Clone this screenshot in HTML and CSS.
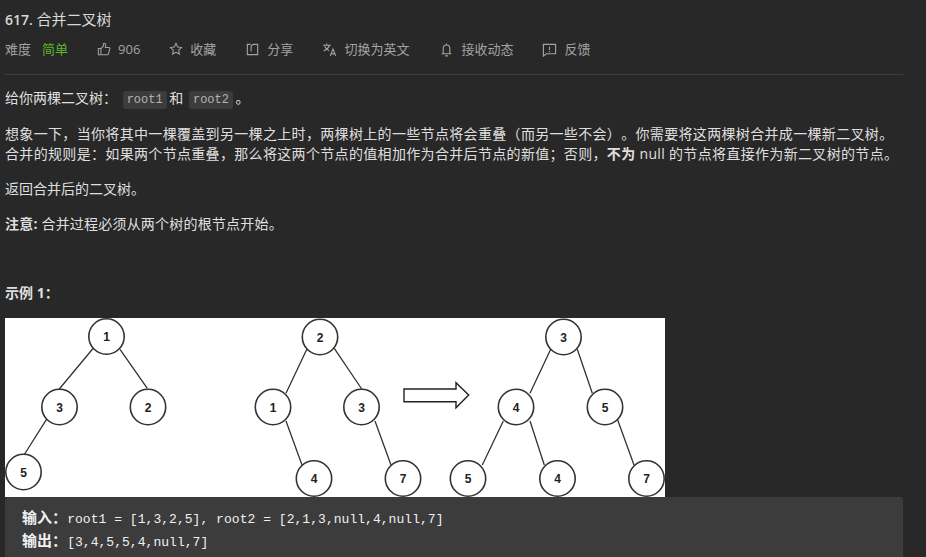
FILE: index.html
```html
<!DOCTYPE html>
<html lang="zh-CN">
<head>
  <meta charset="UTF-8" />
  <meta name="viewport" content="width=device-width, initial-scale=1" />
  <title>617. 合并二叉树</title>
  <link rel="stylesheet" href="styles.css">
</head>
<body>

  <div class="question">
    <!-- Title and toolbar -->
    <h1 class="question-title">617. <span>合并二叉树</span></h1>
    <div class="question-meta">
      <span class="meta-difficulty">难度<em>简单</em></span>
      <span class="meta-item">
        <svg class="icon icon-small" viewBox="0 0 16 16"><path d="M1.500 7.500h3v7h-3zM4.500 7.500l3-3.200V1.600c1.500-.4 2.600.6 2.400 2.200L9.500 6.300h4c.9 0 1.300.7 1.100 1.500l-1.500 5.700c-.2.6-.6 1-1.200 1H4.500"/></svg>
        906
      </span>
      <span class="meta-item">
        <svg class="icon icon-small" viewBox="0 0 16 16"><path d="M8 1.800l1.900 4 4.400.6-3.200 3 .8 4.400L8 11.700l-3.900 2.100.8-4.400-3.200-3 4.400-.6z"/></svg>
        收藏
      </span>
      <span class="meta-item">
        <svg class="icon" viewBox="0 0 16 16"><path d="M6 2.500H2.500v11h11v-11H9.500c-1.800 0-3 1.200-3 3V10"/></svg>
        分享
      </span>
      <span class="meta-item">
        <svg class="icon" viewBox="0 0 16 16"><path d="M1 3.500h8.500M5 1.500v2M8 3.500C7.200 6 4.800 8.200 1.800 9.500M2.800 4.500c.9 2 2.500 3.700 4.700 4.800M8.800 14.800l2.900-7.300 2.900 7.300M9.800 12.600h3.800"/></svg>
        切换为英文
      </span>
      <span class="meta-item meta-bell">
        <svg class="icon" viewBox="0 0 16 16"><path d="M2.800 12.500h10.400M4.500 12.500V7c0-2.200 1.500-3.800 3.500-3.800s3.500 1.600 3.500 3.800v5.500M8 1.500v1.700M6.500 14.800h3"/></svg>
        接收动态
      </span>
      <span class="meta-item">
        <svg class="icon" viewBox="0 0 16 16"><path d="M1.500 2.500h13v10H4.500l-3 2.500zM8 5v3.500M8 9.700v1.200"/></svg>
        反馈
      </span>
    </div>

    <!-- Description -->
    <div class="question-content">
      <p>给你两棵二叉树： <code>root1</code> 和 <code>root2</code> 。</p>
      <p class="spaced">想象一下，当你将其中一棵覆盖到另一棵之上时，两棵树上的一些节点将会重叠（而另一些不会）。你需要将这两棵树合并成一棵新二叉树。<br>合并的规则是：如果两个节点重叠，那么将这两个节点的值相加作为合并后节点的新值；否则，<strong>不为</strong> null 的节点将直接作为新二叉树的节点。</p>
      <p>返回合并后的二叉树。</p>
      <p class="note"><strong>注意:</strong> 合并过程必须从两个树的根节点开始。</p>

      <p class="example-title"><strong>示例 1：</strong></p>

      <svg class="diagram" viewBox="0 0 660 179" width="660" height="179">
        <g class="edges">
          <path d="M88 30.500L54.300 71M115 31.300L142.300 70.300M42.500 99.800L19 137"/>
          <path d="M302.300 30.300L281 75.300M329.300 30.300L356.700 71M281 103L297 147M370 103L386 147"/>
          <path d="M545.700 31.300L525 75.300M572.300 31.300L587.300 75.300M498.300 103L477.300 147M525 103L539.300 147M612.500 101.500L629 147"/>
          <path class="arrow" d="M399 71h52v-6.300l12.700 12.300-12.700 12.700v-6h-52z"/>
        </g>
        <g class="nodes">
          <circle cx="101.500" cy="18.500" r="17.700"/>
          <circle cx="54.500" cy="89" r="17.700"/>
          <circle cx="143" cy="89" r="17.700"/>
          <circle cx="18.500" cy="154" r="17.700"/>
          <circle cx="315" cy="19" r="17.700"/>
          <circle cx="268" cy="89" r="17.700"/>
          <circle cx="356.500" cy="89" r="17.700"/>
          <circle cx="309" cy="160.500" r="17.700"/>
          <circle cx="398" cy="160.500" r="17.700"/>
          <circle cx="558.500" cy="19" r="17.700"/>
          <circle cx="511" cy="89" r="17.700"/>
          <circle cx="600" cy="89" r="17.700"/>
          <circle cx="463" cy="160.500" r="17.700"/>
          <circle cx="552.500" cy="160.500" r="17.700"/>
          <circle cx="641.500" cy="160.500" r="17.700"/>
        </g>
        <g class="labels">
          <text x="101.500" y="23">1</text>
          <text x="54.500" y="93.500">3</text>
          <text x="143" y="93.500">2</text>
          <text x="18.500" y="158.500">5</text>
          <text x="315" y="23.500">2</text>
          <text x="268" y="93.500">1</text>
          <text x="356.500" y="93.500">3</text>
          <text x="309" y="165">4</text>
          <text x="398" y="165">7</text>
          <text x="558.500" y="23.500">3</text>
          <text x="511" y="93.500">4</text>
          <text x="600" y="93.500">5</text>
          <text x="463" y="165">5</text>
          <text x="552.500" y="165">4</text>
          <text x="641.500" y="165">7</text>
        </g>
      </svg>

      <pre class="example-code"><strong>输入：</strong>root1 = [1,3,2,5], root2 = [2,1,3,null,4,null,7]
<strong>输出：</strong>[3,4,5,5,4,null,7]</pre>
    </div>
  </div>

</body>
</html>
```

FILE: styles.css
```css
/* Global reset */
* {
  margin: 0;
  padding: 0;
  box-sizing: border-box;
}

html,
body {
  height: 557px;
  overflow: hidden;
}

body {
  background: #282828;
  color: rgba(255, 255, 255, 0.87);
  font-family: "Open Sans", "Noto Sans CJK SC", sans-serif;
  font-size: 14px;
  line-height: 20px;
  text-spacing-trim: space-all;
}

.question {
  width: 898px;
  margin-left: 5px;
  padding-top: 9px;
}

/* Title and toolbar */
.question-title {
  font-size: 14px;
  font-weight: 600;
  line-height: 20px;
  color: #d9d9d9;
}

.question-title span {
  font-size: 15px;
  font-weight: 400;
}

.question-meta {
  display: flex;
  align-items: center;
  height: 30px;
  margin-top: 4px;
  font-size: 13px;
  color: #a3a3a3;
}

.meta-difficulty em {
  margin-left: 11px;
  margin-right: 29px;
  font-style: normal;
  color: #5cb82c;
}

.meta-item {
  display: flex;
  align-items: center;
  gap: 7px;
  margin-right: 29px;
}

.meta-bell {
  margin-left: 1px;
}

.icon {
  width: 15px;
  height: 15px;
  fill: none;
  stroke: #a3a3a3;
  stroke-width: 1.2;
}

.icon-small {
  width: 14px;
  height: 14px;
}

/* Description */
.question-content {
  margin-top: 10px;
  padding-top: 13px;
  border-top: 1px solid #3e3e3e;
}

.question-content p {
  margin-bottom: 15px;
}

.question-content .spaced {
  letter-spacing: 0.33px;
}

.question-content .note {
  letter-spacing: 0.2px;
}

.question-content strong {
  font-weight: 700;
}

.question-content code {
  display: inline-block;
  height: 18px;
  margin: 0 -1px 0 2px;
  padding: 0 4px;
  border-radius: 3px;
  background: #3c3c3c;
  color: #b4b4b4;
  font-family: "Liberation Mono", monospace;
  font-size: 12px;
  line-height: 19px;
}

.question-content .example-title {
  margin-top: 49px;
}

/* Example picture */
.diagram {
  display: block;
  background: #fff;
}

.edges path {
  fill: none;
  stroke: #333;
  stroke-width: 1.3;
}

.edges .arrow {
  stroke: #222;
  stroke-width: 1.4;
}

.nodes circle {
  fill: #fff;
  stroke: #333;
  stroke-width: 1.6;
}

.labels text {
  fill: #222;
  font-family: "Liberation Sans", sans-serif;
  font-size: 12px;
  font-weight: 700;
  text-anchor: middle;
}

/* Example code block */
.example-code {
  height: 70px;
  padding: 11px 17px;
  border-radius: 3px;
  background: #3c3c3c;
  color: #f0f0f0;
  font-family: "Liberation Mono", "Noto Sans CJK SC", monospace;
  font-size: 13px;
  letter-spacing: 0.04px;
  line-height: 23px;
}

.example-code strong {
  font-size: 15px;
}
```
